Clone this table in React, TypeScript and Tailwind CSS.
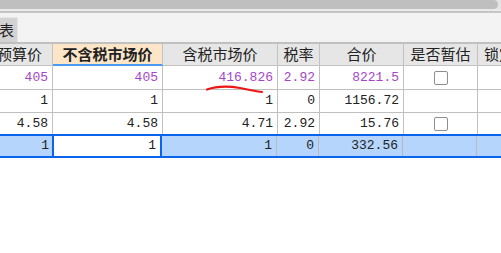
import React from "react";

type Cell = { text: string; purple?: boolean; check?: boolean };

const cjk = { fontFamily: '"Noto Sans CJK SC", "Noto Sans", sans-serif' };
const mono = { fontFamily: '"Liberation Mono", "DejaVu Sans Mono", monospace' };

const widths = ["w-[53px]", "w-[110px]", "w-[115px]", "w-[42px]", "w-[84px]", "w-[74px]", "flex-1"];

const rows: Cell[][] = [
  [
    { text: "405", purple: true },
    { text: "405", purple: true },
    { text: "416.826", purple: true },
    { text: "2.92", purple: true },
    { text: "8221.5", purple: true },
    { text: "", check: true },
    { text: "" },
  ],
  [{ text: "1" }, { text: "1" }, { text: "1" }, { text: "0" }, { text: "1156.72" }, { text: "" }, { text: "" }],
  [
    { text: "4.58" },
    { text: "4.58" },
    { text: "4.71" },
    { text: "2.92" },
    { text: "15.76" },
    { text: "", check: true },
    { text: "" },
  ],
];

const selected: string[] = ["1", "1", "1", "0", "332.56", "", ""];

function CheckBox() {
  return <span className="block w-[14px] h-[14px] rounded-[2px] border border-[#8e8e8e] bg-white" />;
}

export default function App() {
  const rowHeights = ["h-[24px]", "h-[23px]", "h-[21px]"];
  return (
    <div className="relative w-[501px] h-[253px] overflow-hidden bg-white">
      {/* horizontal scrollbar remnant */}
      <div className="flex h-[9px] bg-[#e4e4e4]">
        <div className="flex-1 mr-[3px] rounded-r-[6px] bg-[#bfbfbf]" />
      </div>
      <div className="h-[2px] bg-[#e9e9e9]" />
      <div className="h-[2px] bg-[#c6c6c6]" />
      {/* sheet tab strip */}
      <div className="flex items-end h-[29px] bg-[#f3f3f3]">
        <div
          className="flex items-center justify-end w-[18px] h-[25px] overflow-hidden bg-[#d3d3d3] border-t border-r border-[#e8e8e8] text-[15px] text-[#222] whitespace-nowrap"
          style={cjk}
        >
          <span className="mr-[3px]">报表</span>
        </div>
      </div>
      <div className="h-[2px] bg-[#c0c0c0]" />

      {/* header */}
      <div className="flex h-[22px] bg-[#e6e6e6] text-[15px] text-[#222] whitespace-nowrap" style={cjk}>
        <div className={`${widths[0]} flex items-center justify-end pr-[10px] border-r border-b border-[#c3c3c3] overflow-hidden`}>
          预算价
        </div>
        <div className={`${widths[1]} flex items-center justify-center bg-[#fde6c8] font-bold border-r border-[#c3c3c3] border-b-2 border-b-[#4a9af0]`}>
          不含税市场价
        </div>
        <div className={`${widths[2]} flex items-center justify-center border-r border-b border-[#c3c3c3]`}>含税市场价</div>
        <div className={`${widths[3]} flex items-center justify-center border-r border-b border-[#c3c3c3]`}>税率</div>
        <div className={`${widths[4]} flex items-center justify-center border-r border-b border-[#c3c3c3]`}>合价</div>
        <div className={`${widths[5]} flex items-center justify-center border-r border-b border-[#c3c3c3]`}>是否暂估</div>
        <div className={`${widths[6]} flex items-center pl-[6px] border-b border-[#c3c3c3] overflow-hidden`}>锁定</div>
      </div>

      {/* data rows */}
      {rows.map((row, ri) => (
        <div
          key={ri}
          className={`flex ${rowHeights[ri]} ${ri < 2 ? "border-b border-[#c0c0c0]" : ""} text-[13px]`}
          style={mono}
        >
          {row.map((c, ci) => (
            <div
              key={ci}
              className={`${widths[ci]} flex items-center ${c.check ? "justify-center" : "justify-end pr-[4px]"} ${
                ci < 6 ? "border-r border-[#c0c0c0]" : ""
              } ${c.purple ? "text-[#a546c8]" : "text-[#222]"}`}
            >
              {c.check ? <CheckBox /> : c.text}
            </div>
          ))}
        </div>
      ))}

      {/* selected row */}
      <div className="flex h-[24px] bg-[#b5d5fc] border-y-2 border-[#0a64f0] text-[13px] text-[#222]" style={mono}>
        {selected.map((t, ci) => (
          <div
            key={ci}
            className={`${widths[ci]} flex items-center justify-end pr-[4px] ${
              ci === 0
                ? ""
                : ci === 1
                ? "bg-white border-x-2 border-[#0a64f0] -ml-px"
                : ci < 6
                ? "border-r border-[#b9b9b9]"
                : ""
            }`}
          >
            {t}
          </div>
        ))}
      </div>

      {/* red pen mark under the market price */}
      <svg className="absolute left-0 top-0 pointer-events-none" width="501" height="253">
        <path
          d="M207 89.5 C 214 87, 226 85.5, 240 88 S 256 91.5, 262 92"
          fill="none"
          stroke="#ee1515"
          strokeWidth="2.2"
          strokeLinecap="round"
        />
      </svg>
    </div>
  );
}
